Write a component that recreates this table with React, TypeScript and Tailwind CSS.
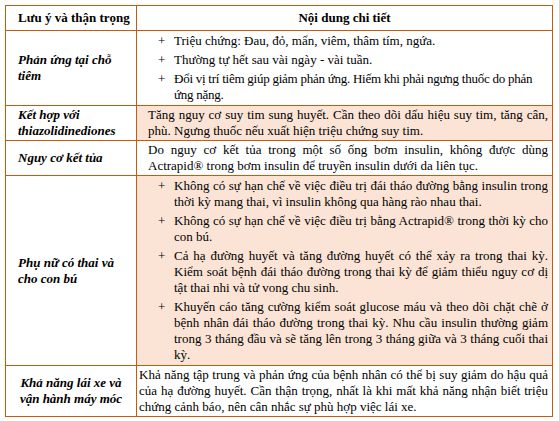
import React from 'react';

type Row = {
  label: string[];
  center?: boolean;
  tint?: boolean;
  text?: string;
  items?: string[];
  gap?: string;
  pad?: string;
};

const rows: Row[] = [
  {
    label: ['Phản ứng tại chỗ', 'tiêm'],
    items: [
      'Triệu chứng: Đau, đỏ, mẩn, viêm, thâm tím, ngứa.',
      'Thường tự hết sau vài ngày - vài tuần.',
      'Đổi vị trí tiêm giúp giảm phản ứng. Hiếm khi phải ngưng thuốc do phản ứng nặng.',
    ],
    gap: 'mt-[3px]',
  },
  {
    label: ['Kết hợp với', 'thiazolidinediones'],
    tint: true,
    text: 'Tăng nguy cơ suy tim sung huyết. Cần theo dõi dấu hiệu suy tim, tăng cân, phù. Ngưng thuốc nếu xuất hiện triệu chứng suy tim.',
    pad: 'pl-[11px]',
  },
  {
    label: ['Nguy cơ kết tủa'],
    text: 'Do nguy cơ kết tủa trong một số ống bơm insulin, không được dùng Actrapid® trong bơm insulin để truyền insulin dưới da liên tục.',
    pad: 'pl-[11px]',
  },
  {
    label: ['Phụ nữ có thai và', 'cho con bú'],
    tint: true,
    items: [
      'Không có sự hạn chế về việc điều trị đái tháo đường bằng insulin trong thời kỳ mang thai, vì insulin không qua hàng rào nhau thai.',
      'Không có sự hạn chế về việc điều trị bằng Actrapid® trong thời kỳ cho con bú.',
      'Cả hạ đường huyết và tăng đường huyết có thể xảy ra trong thai kỳ. Kiểm soát bệnh đái tháo đường trong thai kỳ để giảm thiểu nguy cơ dị tật thai nhi và tử vong chu sinh.',
      'Khuyến cáo tăng cường kiểm soát glucose máu và theo dõi chặt chẽ ở bệnh nhân đái tháo đường trong thai kỳ. Nhu cầu insulin thường giảm trong 3 tháng đầu và sẽ tăng lên trong 3 tháng giữa và 3 tháng cuối thai kỳ.',
    ],
    gap: 'mt-[3px]',
  },
  {
    label: ['Khả năng lái xe và', 'vận hành máy móc'],
    center: true,
    text: 'Khả năng tập trung và phản ứng của bệnh nhân có thể bị suy giảm do hậu quả của hạ đường huyết. Cần thận trọng, nhất là khi mất khả năng nhận biết triệu chứng cảnh báo, nên cân nhắc sự phù hợp việc lái xe.',
    pad: 'pl-[2px]',
  },
];

export default function App() {
  return (
    <div className="min-h-screen bg-white pt-[5px] pl-[5px] text-[13px] leading-[16px] text-black [font-family:'Liberation_Serif','Times_New_Roman',serif]">
      <table className="w-[548px] border-collapse border-[1.5px] border-[#c55a11]">
        <thead>
          <tr>
            <th className="w-[131px] border-[1.5px] border-[#c55a11] py-[4px] pl-[12px] text-left font-bold">
              Lưu ý và thận trọng
            </th>
            <th className="border-[1.5px] border-[#c55a11] py-[4px] text-center font-bold">
              Nội dung chi tiết
            </th>
          </tr>
        </thead>
        <tbody>
          {rows.map((row, i) => (
            <tr key={i}>
              <td
                className={`border-[1.5px] border-[#c55a11] bg-white align-middle font-bold italic ${
                  row.center ? 'px-[4px] text-center' : 'pl-[12px] pr-[4px] text-left'
                }`}
              >
                {row.label.map((l) => (
                  <div key={l}>{l}</div>
                ))}
              </td>
              <td
                className={`border-[1.5px] border-[#c55a11] py-[1px] pr-[4px] ${
                  row.tint ? 'bg-[#fbe4d5]' : 'bg-white'
                } ${row.items ? 'pl-[21px]' : row.pad}`}
              >
                {row.text && <p className="text-justify">{row.text}</p>}
                {row.items && (
                  <ul className="py-[1px]">
                    {row.items.map((it, j) => (
                      <li key={j} className={`flex ${j > 0 ? row.gap : ''}`}>
                        <span className="w-[16px] shrink-0">+</span>
                        <span className={i === 0 && j === 2 ? 'tracking-[-0.25px]' : 'text-justify'}>{it}</span>
                      </li>
                    ))}
                  </ul>
                )}
              </td>
            </tr>
          ))}
        </tbody>
      </table>
      <p className="mt-[5px] pl-[70px] font-bold">Bảng 3. Lưu ý và thận trọng khi dùng Actrapid®</p>
    </div>
  );
}
